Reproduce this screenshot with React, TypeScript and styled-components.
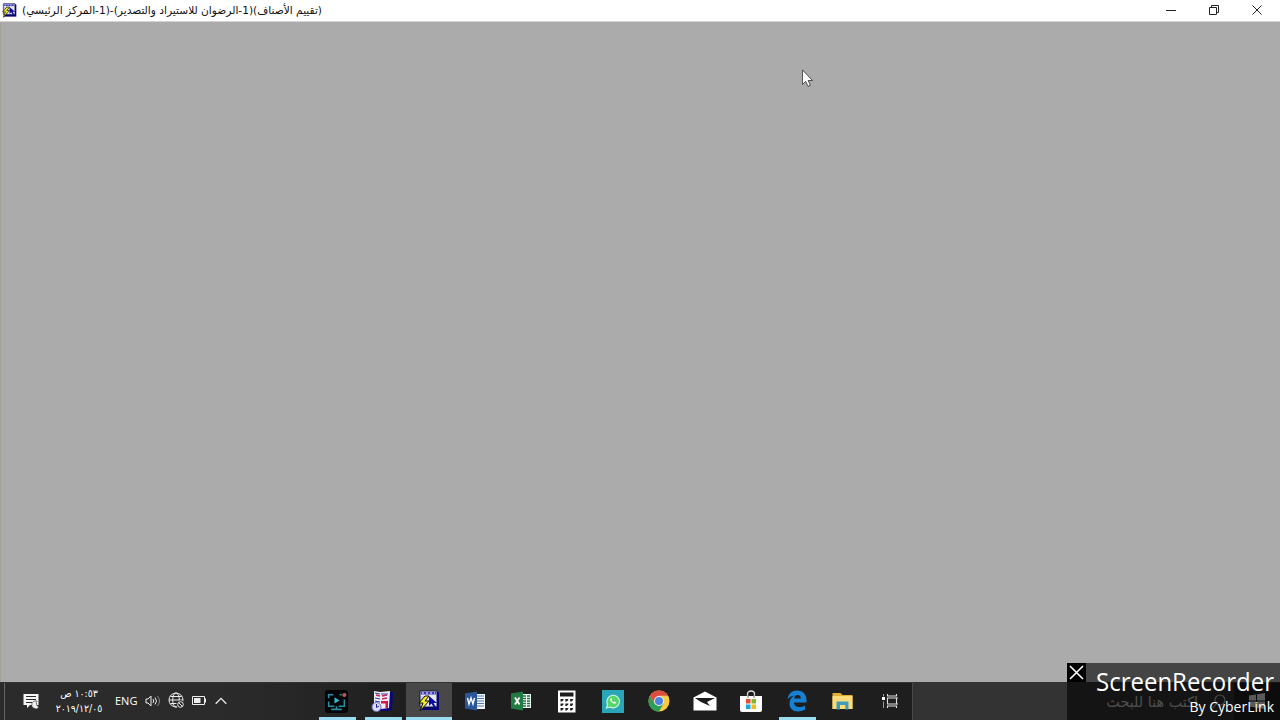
import styled, { createGlobalStyle } from "styled-components";

interface AppButtonProps {
  $active?: boolean;
  $running?: boolean;
}

const LegacyIcon: React.FC<{ size: number }> = ({ size }) => (
  <svg width={size} height={size} viewBox="0 0 22 22">
    <path d="M3 2h18v18H3z" fill="#06067c" />
    <path d="M2 1h17v16H2z" fill="#e6e6f8" stroke="#101040" />
    <path d="M3 2h15v2.500H3z" fill="#3a3ac0" />
    <path d="M4 3h2M8 3h2M12 3h2M16 3h1" stroke="#fff" />
    <path d="M3 6h6v10H3z" fill="#c8c8ec" />
    <path d="M11 6v10l2.500-2.500L16 18l2-1-2.500-4H19z" fill="#0c0ca0" />
    <path d="M7 6 1 13h4l-3 8 9-10H7l4-5z" fill="#f4ec20" stroke="#151500" />
  </svg>
);

const RecorderIcon = () => (
  <svg width="23" height="23" viewBox="0 0 22 22">
    <rect width="22" height="22" rx="3" fill="#020608" />
    <path
      d="M3.500 8V4.500H8M14 4.500h2M3.500 11v4.500H9M18.500 9v6.500H13M11 15.500V19M6 18.500h10"
      fill="none"
      stroke="#258ea0"
      strokeWidth="1.500"
    />
    <path d="M9 7v6l5-3z" fill="#35b7ca" />
    <circle cx="18.500" cy="4.800" r="2" fill="#b65b58" />
  </svg>
);

const LedgerIcon = () => (
  <svg width="23" height="23" viewBox="0 0 23 23">
    <path d="M6 3l16-1-1 18-5 1H9z" fill="#08087a" />
    <path d="M3 1l6 1 10-1-1 17-8 1-7-5z" fill="#f0eefa" />
    <path d="M5 5l4 1M11 6l5-1M11 9l5-1" stroke="#c52352" strokeWidth="1.300" />
    <path d="M4 3l5 1M10 4h7M4 8l5 1M4 11l5 1" stroke="#3436b4" />
    <path d="M10 11h7v7h-2.500v-4.500H10z" fill="#d01948" />
    <circle cx="5.500" cy="17" r="4.500" fill="#d9dcf4" stroke="#6a6dc0" />
    <path d="M5.500 14v3.500L8 16" fill="none" stroke="#25257c" />
  </svg>
);

const WordIcon = () => (
  <svg width="22" height="20" viewBox="0 0 22 20">
    <path d="M11 3h10v15H11z" fill="#f4f7fb" />
    <path d="M12 5h8M12 7.500h8M12 10h8M12 12.500h8M12 15h8" stroke="#5277b5" />
    <path d="M1 2.500 13 .5v19L1 17.500z" fill="#2b579a" />
    <path d="m3.500 7 1.500 6 2-6 2 6 1.500-6" fill="none" stroke="#fff" strokeWidth="1.400" />
  </svg>
);

const ExcelIcon = () => (
  <svg width="22" height="20" viewBox="0 0 22 20">
    <path d="M12 3h9v14h-9z" fill="#f2f8f4" />
    <path d="M13 5h7M13 7.500h7M13 10h7M13 12.500h7M13 15h7" stroke="#217346" strokeWidth="1.300" />
    <path d="M16.500 3v14" stroke="#f2f8f4" />
    <path d="M1 2.500 13 .5v19L1 17.500z" fill="#217c43" />
    <path d="m5 6.500 4.500 7M9.500 6.500l-4.500 7" stroke="#fff" strokeWidth="1.800" />
  </svg>
);

const CalculatorIcon = () => (
  <svg width="18" height="23" viewBox="0 0 18 22">
    <path d="M0 0h17.500v22H0z" fill="#fff" />
    <path d="M2 2h13.500v4H2z" fill="#1b1b1b" />
    <path
      d="M2.500 8.500h3v1L4 11H2.500zM7.300 8.500h3v1L8.800 11H7.300zM12.100 8.500h3v1L13.600 11h-1.500zM2.500 13h3v1L4 15.500H2.500zM7.300 13h3v1l-1.500 1.500H7.300zM12.100 13h3v1l-1.500 1.500h-1.500zM2.500 17.500h3v1L4 20H2.500zM7.300 17.500h3v1L8.800 20H7.300zM12.100 17.500h3v1L13.600 20h-1.500z"
      fill="#222"
    />
  </svg>
);

const WhatsAppIcon = () => (
  <svg width="22" height="23" viewBox="0 0 22 23">
    <path d="M0 0h22v23H0z" fill="#2ba6b8" />
    <path d="M4.500 18 5.600 14.500A6.300 6.300 0 1 1 8 17z" fill="#55d66a" stroke="#d6f5df" strokeWidth="1.100" />
    <path d="M8.500 8.500c-.8 1 0 2.500 1.200 3.700 1.300 1.300 3 2.100 3.900 1.100l.6-1-1.700-.9-.8.8c-1-.4-1.800-1.200-2.100-2.100l.7-.8-.8-1.600z" fill="#fff" />
  </svg>
);

const ChromeIcon = () => (
  <svg width="22" height="22" viewBox="0 0 22 22">
    <circle cx="11" cy="11" r="10.500" fill="#f8cb43" />
    <path d="M1.900 5.750A10.500 10.500 0 0 1 20.100 5.750H11L6.450 13.600z" fill="#dc4e41" />
    <path d="M1.900 5.750A10.500 10.500 0 0 0 11 21.500l4.550-7.900L11 16l-4.550-2.400z" fill="#2e9d59" />
    <circle cx="11" cy="11" r="5" fill="#eef1f5" />
    <circle cx="11" cy="11" r="4" fill="#4e83e4" />
  </svg>
);

const MailIcon = () => (
  <svg width="24" height="20" viewBox="0 0 24 20">
    <path d="M.500 6.500 12 .5l11.500 6v13H.500z" fill="#fff" />
    <path d="M2 7h20l-8 4 3 4L8 11z" fill="#1b1b1b" />
  </svg>
);

const StoreIcon = () => (
  <svg width="22" height="22" viewBox="0 0 22 22">
    <path d="M7.500 8V4c0-4 7-4 7 0v4" fill="none" stroke="#ddd" strokeWidth="1.300" />
    <path d="M0 6h22v14q0 2-2 2H2q-2 0-2-2z" fill="#fff" />
    <path d="M8 8V5M14 8V5" stroke="#777" />
    <path d="M6 9h4.500v4.500H6z" fill="#e94d30" />
    <path d="M11.500 9H16v4.500h-4.500z" fill="#7eb928" />
    <path d="M6 14.500h4.500V19H6z" fill="#1da8dc" />
    <path d="M11.500 14.500H16V19h-4.500z" fill="#f4b91b" />
  </svg>
);

const EdgeIcon = () => (
  <svg width="20" height="22" viewBox="0 0 20 22">
    <path
      d="M.500 9.500C1.500 3.500 5 .500 10 .500c6 0 9.500 4 9.500 9.500v2.500H7c.2 5.500 7 5.500 11 3v4c-2 1.200-4.500 1.900-7 1.900-5.300 0-8.500-3.300-8.500-8 0-3.600 2-6.400 5.200-7.900C4.500 6 2 7 .500 9.500zM7.100 8.500h6.800c0-4.500-6.300-4.700-6.800 0z"
      fill="#1681d4"
    />
  </svg>
);

const FolderIcon = () => (
  <svg width="21" height="18" viewBox="0 0 21 18">
    <path d="M.500 1h8l2 2h10v14H.500z" fill="#e2ae36" />
    <path d="M.500 4h20v13H.500z" fill="#fbdc7b" />
    <path d="M4.500 17.500v-8h12v8h-3.200V13H8v4.500z" fill="#429bb8" />
  </svg>
);

const TaskViewIcon = () => (
  <svg width="17" height="16" viewBox="0 0 17 16">
    <path d="M5.500 5h9v6h-9zM5.500 1v2h9V1M5.500 15v-2h9v2" fill="none" stroke="#e0e0e0" strokeWidth="1.100" />
    <path d="M14.500 5H16M14.500 11H16" stroke="#ccc" />
    <path d="M1.500 1v2.500M1.500 8.500V15" stroke="#999" />
    <path d="M0 4h3v3H0z" fill="#fff" />
  </svg>
);

const WindowsIcon = () => (
  <svg width="16" height="16" viewBox="0 0 16 16">
    <path d="m0 2.500 7-1v6H0zM8 1.300 16 0v7.500H8zM0 8.500h7v6l-7-1zM8 8.500h8V16l-8-1.300z" fill="#e0e0e0" />
  </svg>
);

const App = () => (
  <Screen>
    <GlobalStyle />
    <TitleBar>
      <LegacyIcon size={15} />
      <Title>(تقييم الأصناف)(1-الرضوان للاستيراد والتصدير)-(1-المركز الرئيسي)</Title>
      <WindowControls>
        <svg width="10" height="10" viewBox="0 0 10 10">
          <path d="M0 5.500h10" stroke="#222" />
        </svg>
        <svg width="10" height="10" viewBox="0 0 10 10" fill="none" stroke="#222">
          <path d="M.500 2.500h7v7h-7zM2.500 2.500v-2h7v7h-2" />
        </svg>
        <svg width="10" height="10" viewBox="0 0 10 10">
          <path d="m.500.500 9 9M9.500.500l-9 9" stroke="#222" />
        </svg>
      </WindowControls>
    </TitleBar>
    <Workspace />
    <Taskbar>
      <Tray>
        <ShowDesktop />
        <Notifications>
          <svg width="17" height="17" viewBox="0 0 17 17">
            <path d="M.500 1h15v11H7l-3 3v-3H.500z" fill="#f5f5f5" />
            <path d="M3 3.500h10M3 6.500h10M3 9.500h6" stroke="#292929" />
            <path d="M14 8a4 4 0 1 0 2 6 4 4 0 0 1-2-6z" fill="#eee" stroke="#292929" strokeWidth=".6" />
          </svg>
        </Notifications>
        <Clock>
          <Time>١٠:٥٣ ص</Time>
          <DateText>٢٠١٩/١٢/٠٥</DateText>
        </Clock>
        <Language>ENG</Language>
        <StatusIcons>
          <svg width="16" height="14" viewBox="0 0 16 14" fill="none" stroke="#eee">
            <path d="M1 5h2l3-3v10L3 9H1z" />
            <path d="M8 5q1.500 2 0 4M10 3.500q3 3.500 0 7" />
            <path d="M12.500 2q4 5 0 10" stroke="#888" />
          </svg>
          <svg width="17" height="17" viewBox="0 0 17 17" fill="none" stroke="#eee">
            <circle cx="8" cy="8" r="7" />
            <ellipse cx="8" cy="8" rx="3.300" ry="7" />
            <path d="M1 8h14M2.500 4.500h11M2.500 11.500h7" />
            <circle cx="12.500" cy="12.500" r="3.800" fill="#292929" stroke="#292929" />
            <circle cx="12.500" cy="12.500" r="2.800" />
            <path d="m10.500 10.500 4 4" />
          </svg>
          <svg width="16" height="10" viewBox="0 0 16 10">
            <path d="M.500.500h12v8H.500z" fill="none" stroke="#eee" />
            <path d="M2 2h6.500v5H2z" fill="#eee" />
            <path d="M13.500 2.500v4" stroke="#eee" />
          </svg>
          <svg width="12" height="8" viewBox="0 0 12 8">
            <path d="M.700 6.700 6 1.400l5.300 5.300" fill="none" stroke="#eee" strokeWidth="1.300" />
          </svg>
        </StatusIcons>
      </Tray>
      <Apps>
        <AppButton $running><RecorderIcon /></AppButton>
        <AppButton $running><LedgerIcon /></AppButton>
        <AppButton $active><LegacyIcon size={22} /></AppButton>
        <AppButton><WordIcon /></AppButton>
        <AppButton><ExcelIcon /></AppButton>
        <AppButton><CalculatorIcon /></AppButton>
        <AppButton><WhatsAppIcon /></AppButton>
        <AppButton><ChromeIcon /></AppButton>
        <AppButton><MailIcon /></AppButton>
        <AppButton><StoreIcon /></AppButton>
        <AppButton $running><EdgeIcon /></AppButton>
        <AppButton><FolderIcon /></AppButton>
        <AppButton><TaskViewIcon /></AppButton>
      </Apps>
      <Search>
        <SearchText>اكتب هنا للبحث</SearchText>
        <svg width="14" height="16" viewBox="0 0 14 16" fill="none" stroke="#b5b5b5" strokeWidth="1.200">
          <circle cx="8" cy="6" r="5" />
          <path d="m4.500 9.500-4 5" />
        </svg>
      </Search>
      <Start><WindowsIcon /></Start>
    </Taskbar>
    <Watermark>
      <CloseBox>
        <svg width="15" height="15" viewBox="0 0 15 15">
          <path d="m1 1 13 13M14 1 1 14" stroke="#fff" strokeWidth="1.600" />
        </svg>
      </CloseBox>
      <Brand>
        <Product>ScreenRecorder</Product>
        <Company>By CyberLink</Company>
      </Brand>
    </Watermark>
    <Pointer width="12" height="19" viewBox="0 0 13 20">
      <path d="M.500.700v15.800L4 13.100l2.500 5.400 2.600-1.200-2.400-5.100h4.700z" fill="#fff" stroke="#333" strokeWidth=".9" />
    </Pointer>
  </Screen>
);

export default App;

const GlobalStyle = createGlobalStyle`
  * {
    box-sizing: border-box;
  }

  body {
    margin: 0;
    overflow: hidden;
  }

  svg {
    display: block;
    flex-shrink: 0;
  }
`;

const Screen = styled.div`
  position: relative;
  display: flex;
  flex-direction: column;
  width: 1280px;
  height: 720px;
  overflow: hidden;
  background: #ababab;
  font-family: "Open Sans", "DejaVu Sans", sans-serif;
`;

const TitleBar = styled.header`
  display: flex;
  align-items: center;
  height: 22px;
  padding: 0 18px 1px 2px;
  background: #fff;
  border-bottom: 1px solid #d4d4d4;
`;

const Title = styled.span`
  margin-left: 5px;
  padding-top: 2px;
  direction: rtl;
  white-space: nowrap;
  color: #111;
  font: 11px/18px "DejaVu Sans", sans-serif;
  transform: scaleX(0.965);
  transform-origin: left;
`;

const WindowControls = styled.div`
  display: flex;
  gap: 33px;
  margin-left: auto;
  padding-bottom: 1px;
`;

const Workspace = styled.main`
  flex: 1;
  background: #ababab;
  border-left: 1px solid #a3a397;
`;

const Taskbar = styled.footer`
  display: flex;
  height: 38px;
  background: linear-gradient(90deg, #2b2b2b 0 220px, #1e1e1e 420px);
  border-top: 1px solid #333;
`;

const Tray = styled.div`
  display: flex;
  align-items: center;
  width: 314px;
  padding-bottom: 2px;
  color: #fff;
`;

const ShowDesktop = styled.div`
  align-self: stretch;
  width: 5px;
  margin-bottom: -2px;
  border-right: 1px solid #666;
`;

const Notifications = styled.div`
  width: 50px;
  padding: 2px 0 0 18px;
`;

const Clock = styled.div`
  display: flex;
  flex-direction: column;
  align-items: center;
  width: 48px;
  font: 10px/15px "DejaVu Sans", sans-serif;
  transform: scaleX(0.94);
`;

const Time = styled.span`
  direction: rtl;
  white-space: nowrap;
`;

const DateText = styled.span`
  white-space: nowrap;
`;

const Language = styled.span`
  margin-left: 12px;
  width: 30px;
  font-size: 11px;
  white-space: nowrap;
`;

const StatusIcons = styled.div`
  display: flex;
  align-items: center;
  gap: 7px;
`;

const Apps = styled.nav`
  display: flex;
  width: 598px;
`;

const AppButton = styled.div<AppButtonProps>`
  display: flex;
  align-items: center;
  justify-content: center;
  width: 46px;
  height: 37px;
  padding: 0 1px 1px 0;
  background: ${({ $active }) =>
    $active
      ? "linear-gradient(#9adcf0, #9adcf0) 0 100% / 46px 3px no-repeat #484848"
      : "transparent"};
  ${({ $running }) =>
    $running &&
    "background: linear-gradient(#9adcf0, #9adcf0) 4.500px 100% / 37px 3px no-repeat;"}

  &:last-child {
    padding: 0 0 2px 2px;
  }
`;

const Search = styled.div`
  display: flex;
  align-items: center;
  justify-content: flex-end;
  gap: 14px;
  width: 322px;
  padding-right: 8px;
  background: #333;
  border-left: 1px solid #4a4a4a;
`;

const SearchText = styled.span`
  direction: rtl;
  color: #c0c0c0;
  white-space: nowrap;
  font: 14.4px/20px "DejaVu Sans", sans-serif;
`;

const Start = styled.div`
  display: flex;
  flex: 1;
  align-items: center;
  justify-content: center;
  padding-bottom: 1px;
`;

/* Floats above both the workspace and the taskbar */
const Watermark = styled.div`
  position: absolute;
  right: 0;
  bottom: 0;
  display: flex;
  width: 213px;
  height: 57px;
  background: rgba(0, 0, 0, 0.6);
`;

const CloseBox = styled.div`
  display: flex;
  flex-shrink: 0;
  align-items: center;
  justify-content: center;
  width: 19px;
  height: 19px;
  background: #000;
`;

const Brand = styled.div`
  display: flex;
  flex: 1;
  flex-direction: column;
  align-items: flex-end;
  min-width: 0;
  padding: 3px 6px 0 0;
  color: #fff;
`;

const Product = styled.span`
  font-size: 26px;
  line-height: 31px;
  transform: scaleX(0.922);
  transform-origin: right;
`;

const Company = styled.span`
  padding-top: 1px;
  font-size: 14px;
  line-height: 18px;
`;

const Pointer = styled.svg`
  position: absolute;
  left: 802px;
  top: 69px;
`;
